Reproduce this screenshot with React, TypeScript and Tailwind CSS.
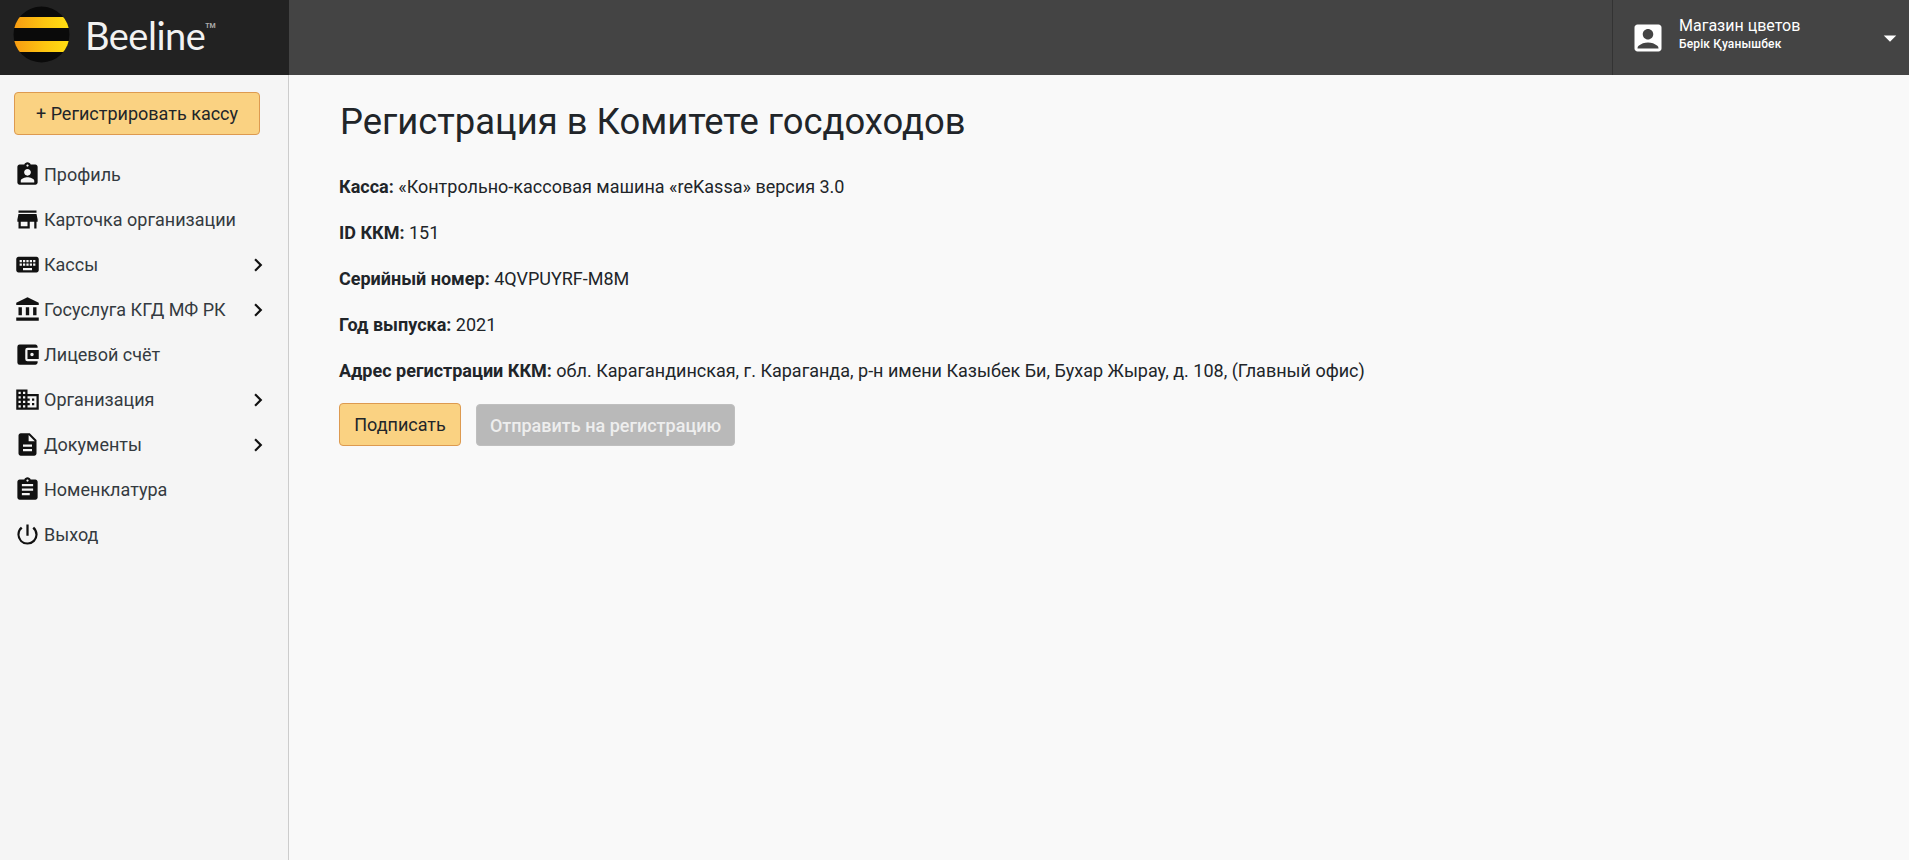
import React from "react";
import {
  MdAssignmentInd, MdStore, MdKeyboard, MdAccountBalance, MdAccountBalanceWallet,
  MdBusiness, MdDescription, MdAssignment, MdPowerSettingsNew, MdAccountBox,
  MdChevronRight, MdArrowDropDown,
} from "react-icons/md";

const nav = [
  { icon: MdAssignmentInd, label: "Профиль" },
  { icon: MdStore, label: "Карточка организации" },
  { icon: MdKeyboard, label: "Кассы", arrow: true },
  { icon: MdAccountBalance, label: "Госуслуга КГД МФ РК", arrow: true },
  { icon: MdAccountBalanceWallet, label: "Лицевой счёт" },
  { icon: MdBusiness, label: "Организация", arrow: true },
  { icon: MdDescription, label: "Документы", arrow: true },
  { icon: MdAssignment, label: "Номенклатура" },
  { icon: MdPowerSettingsNew, label: "Выход" },
];

const info = [
  ["Касса:", "«Контрольно-кассовая машина «reKassa» версия 3.0"],
  ["ID ККМ:", "151"],
  ["Серийный номер:", "4QVPUYRF-M8M"],
  ["Год выпуска:", "2021"],
  ["Адрес регистрации ККМ:", "обл. Карагандинская, г. Караганда, р-н имени Казыбек Би, Бухар Жырау, д. 108, (Главный офис)"],
];

function Logo() {
  return (
    <svg width="57" height="57" viewBox="0 0 57 57" className="mb-[6px] shrink-0">
      <defs>
        <linearGradient id="stripe" x1="0" x2="1" y1="0" y2="0">
          <stop offset="0" stopColor="#f79a12" />
          <stop offset="0.55" stopColor="#fdc511" />
          <stop offset="1" stopColor="#ffe012" />
        </linearGradient>
        <clipPath id="disc"><circle cx="28.5" cy="28.5" r="28" /></clipPath>
      </defs>
      <circle cx="28.5" cy="28.5" r="28" fill="#0a0a0a" />
      <g clipPath="url(#disc)">
        <rect x="0" y="11" width="57" height="11" fill="url(#stripe)" />
        <rect x="0" y="35" width="57" height="11" fill="url(#stripe)" />
      </g>
    </svg>
  );
}

export default function App() {
  return (
    <div className="flex h-[860px] flex-col overflow-hidden bg-[#f9f9f9] font-['Roboto',sans-serif] text-[18px] text-[#212529]">
      <header className="flex h-[75px] shrink-0 bg-[#444444]">
        <div className="flex w-[289px] items-center bg-[#222222] pl-[13px]">
          <Logo />
          <span className="mb-[6px] ml-[15px] font-['Lato',sans-serif] text-[38px] leading-none tracking-[-0.5px] text-[#f2f2f2]">Beeline</span>
          <span className="mb-[22px] text-[7px] font-bold text-[#aaaaaa]">TM</span>
        </div>
        <div className="flex-1" />
        <div className="flex w-[297px] items-center border-l border-[#333333] text-white">
          <MdAccountBox className="ml-[17px] size-[36px]" />
          <div className="mb-[7px] ml-[13px] flex-1">
            <div className="text-[16px] leading-[21px]">Магазин цветов</div>
            <div className="text-[12px] font-medium leading-[17px] tracking-[0.15px]">Берік Қуанышбек</div>
          </div>
          <MdArrowDropDown className="mr-[4px] size-[30px]" />
        </div>
      </header>
      <div className="flex min-h-0 flex-1">
        <aside className="w-[289px] shrink-0 border-r border-[#cccccc] bg-[#f5f5f5]">
          <button className="ml-[14px] mt-[17px] h-[43px] w-[246px] rounded-[4px] border border-[#dd9a50] bg-[#fad282] text-[#212529]">
            + Регистрировать кассу
          </button>
          <nav className="mt-[17px]">
            {nav.map(({ icon: Icon, label, arrow }) => (
              <div key={label} className="flex h-[45px] items-center pl-[14px] text-[#343a40]">
                <Icon className="size-[27px] shrink-0 text-[#111111]" />
                <span className="ml-[3px] flex-1 whitespace-nowrap">{label}</span>
                {arrow && <MdChevronRight className="mr-[17px] size-[26px] text-[#111111]" />}
              </div>
            ))}
          </nav>
        </aside>
        <main className="flex-1 pl-[50px]">
          <h1 className="ml-px mt-[22px] text-[36.4px] font-normal leading-[50px] text-[#212529]">Регистрация в Комитете госдоходов</h1>
          <div className="mt-[26px] flex flex-col gap-[19px]">
            {info.map(([k, v]) => (
              <p key={k} className="leading-[27px]"><b className="font-bold">{k}</b> {v}</p>
            ))}
          </div>
          <div className="mt-[19px] flex gap-[15px]">
            <button className="h-[43px] w-[122px] rounded-[4px] border border-[#dd9a50] bg-[#fad282] text-[#212529]">Подписать</button>
            <button className="mt-px h-[42px] w-[259px] rounded-[4px] border border-[#bfbfbf] bg-[#b9b9b9] font-medium text-[#eeeeee]">Отправить на регистрацию</button>
          </div>
        </main>
      </div>
    </div>
  );
}
